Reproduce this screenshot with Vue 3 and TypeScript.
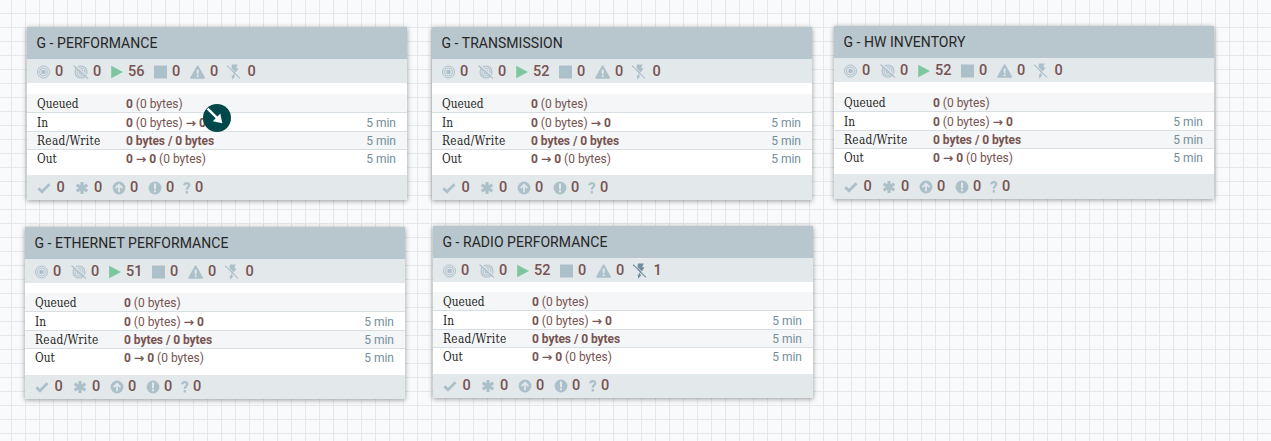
<script setup lang="ts">
interface Group {
  name: string
  x: number
  y: number
  running: number
  disabled: number
}

const groups: Group[] = [
  { name: 'G - PERFORMANCE', x: 26.5, y: 27.45, running: 56, disabled: 0 },
  { name: 'G - TRANSMISSION', x: 431.5, y: 27.45, running: 52, disabled: 0 },
  { name: 'G - HW INVENTORY', x: 833.5, y: 26.45, running: 52, disabled: 0 },
  { name: 'G - ETHERNET PERFORMANCE', x: 24.5, y: 226.5, running: 51, disabled: 0 },
  { name: 'G - RADIO PERFORMANCE', x: 432.5, y: 225.5, running: 52, disabled: 1 },
]
</script>

<template>
  <main class="canvas">
    <section
      v-for="g in groups"
      :key="g.name"
      class="group"
      :style="{ left: g.x + 'px', top: g.y + 'px' }"
    >
      <h2 class="title">{{ g.name }}</h2>

      <div class="bar status">
        <svg class="icon" width="14" height="14" viewBox="0 0 14 14">
          <g fill="none" stroke="currentColor">
            <circle cx="6.5" cy="7" r="6" stroke-width="1" />
            <circle cx="6.5" cy="7" r="4" stroke-width="1" />
          </g>
          <circle cx="6.5" cy="7" r="2.3" fill="currentColor" />
        </svg>
        <b>0</b>
        <svg class="icon" width="16" height="14" viewBox="0 0 16 14">
          <g fill="none" stroke="currentColor" stroke-width="1.1">
            <circle cx="8" cy="7" r="6" />
            <circle cx="8" cy="7" r="4" />
            <circle cx="8" cy="7" r="1.9" />
            <path class="cut" d="M1.3 -.4L15.8 12.6" stroke-width="1.2" />
            <path d="M.5 .5L15 13.5" />
          </g>
        </svg>
        <b>0</b>
        <svg class="icon running" width="13" height="14" viewBox="0 0 13 14">
          <path d="M.2 .8L12 7L.2 13.2Z" fill="currentColor" />
        </svg>
        <b>{{ g.running }}</b>
        <svg class="icon" width="14" height="14" viewBox="0 0 14 14">
          <path d="M0 .5H13V13.5H0Z" fill="currentColor" />
        </svg>
        <b>0</b>
        <svg class="icon" width="16" height="14" viewBox="0 0 16 14">
          <path
            fill="currentColor"
            fill-rule="evenodd"
            d="M6.9.8Q7.6-.3 8.4.8L15 12.4Q15.4 13.7 14.2 13.7H1Q-.1 13.6.3 12.4ZM6.6 4.8L6.9 9.2H8.5L8.8 4.8ZM6.8 10.2V12H8.6V10.2Z"
          />
        </svg>
        <b>0</b>
        <svg class="icon" :class="{ active: g.disabled > 0 }" width="14" height="16" viewBox="0 0 14 16">
          <path
            fill="currentColor"
            d="M5 .6H10.7L9.2 4.2H11.6L8.9 8.2L8 9.6L7.3 11.8L8.3 12.1L5.4 15.7L4.6 11.2L5.9 11.7L6.5 8.6L4.2 5.2Z"
          />
          <path class="cut" d="M1.2 1.2L13.7 13.6M-.8 2.2L11.8 14.8" fill="none" stroke-width=".8" />
          <path d="M.1 1.6L12.9 14.3" fill="none" stroke="currentColor" stroke-width="1.15" />
        </svg>
        <b>{{ g.disabled }}</b>
      </div>

      <dl class="stats">
        <div class="row">
          <dt><span>Queued</span></dt>
          <dd><b>0</b> (0 bytes)</dd>
        </div>
        <div class="row">
          <dt><span>In</span></dt>
          <dd><b>0</b> (0 bytes) <i>→</i> <b>0</b></dd>
          <dd class="window">5 min</dd>
        </div>
        <div class="row">
          <dt><span class="wide">Read/Write</span></dt>
          <dd><b>0 bytes / 0 bytes</b></dd>
          <dd class="window">5 min</dd>
        </div>
        <div class="row">
          <dt><span>Out</span></dt>
          <dd><b>0</b> <i>→</i> <b>0</b> (0 bytes)</dd>
          <dd class="window">5 min</dd>
        </div>
      </dl>

      <div class="bar versions">
        <svg class="icon" width="14" height="14" viewBox="0 0 14 14">
          <path d="M1.3 7.2L5 10.8L12.5 3.3" fill="none" stroke="currentColor" stroke-width="2.8" />
        </svg>
        <b>0</b>
        <svg class="icon" width="14" height="14" viewBox="0 0 14 14">
          <path d="M7 .9V13.1M1.6 3.9L12.4 10.1M12.4 3.9L1.6 10.1" stroke="currentColor" stroke-width="3.1" />
        </svg>
        <b>0</b>
        <svg class="icon" width="14" height="14" viewBox="0 0 14 14">
          <circle cx="7" cy="7" r="6.4" fill="currentColor" />
          <path class="cut" d="M7 11.2V4M3.6 7.1L7 3.7L10.4 7.1" fill="none" stroke-width="1.8" />
        </svg>
        <b>0</b>
        <svg class="icon" width="14" height="14" viewBox="0 0 14 14">
          <circle cx="7" cy="7" r="6.4" fill="currentColor" />
          <path class="cut" d="M7 2.4V8.2M7 9.3V11.3" fill="none" stroke-width="2" />
        </svg>
        <b>0</b>
        <svg class="icon" width="8" height="14" viewBox="0 0 8 14">
          <path
            d="M1.1 4.3C1.8 1.4 6.3 1.6 6.2 4.2C6.1 6 3.8 6.2 3.8 8.8M3.8 10.1V12.5"
            fill="none"
            stroke="currentColor"
            stroke-width="2.3"
          />
        </svg>
        <b>0</b>
      </div>
    </section>

    <svg class="connector" width="28" height="28" viewBox="0 0 28 28">
      <circle cx="14" cy="14" r="14" />
      <path class="shaft" d="M4.6 4.7L15.5 15.3" />
      <path class="head" d="M19.3 19.3L9.8 17.3L17.3 9.6Z" />
    </svg>
  </main>
</template>

<style>
body {
  margin: 0;
}
</style>

<style scoped>
.canvas {
  position: relative;
  width: 1271px;
  height: 441px;
  overflow: hidden;
  background-color: #f9fafb;
  background-image:
    linear-gradient(to right, #e5e8eb 1px, transparent 1px),
    linear-gradient(to bottom, #e5e8eb 1px, transparent 1px);
  background-size: 14px 14px;
  background-position: 11px 13px;
  font-family: Roboto, 'Liberation Sans', sans-serif;
}

.group {
  position: absolute;
  width: 380px;
  height: 172.4px;
  background: #fff;
  box-shadow: 0 1px 5px rgba(0, 0, 0, 0.4);
}

.title {
  box-sizing: border-box;
  height: 32px;
  margin: 0;
  padding-left: 10px;
  background: #b8c6cd;
  color: #262626;
  font-size: 14px;
  font-weight: 400;
  letter-spacing: 0.04px;
  line-height: 32.2px;
}

.bar {
  display: grid;
  align-items: center;
  height: 24.4px;
  padding-left: 10.5px;
  background: #e3e8eb;
}

.status {
  box-sizing: border-box;
  height: 24px;
  padding-top: 1px;
  grid-template-columns: 18px 18px 20px 18px 17px 26px 18px 18px 20px 18px 19.5px 20px;
}

.status .icon:nth-of-type(6) {
  margin-left: -1px;
}

.versions {
  grid-template-columns: 19.5px 18.5px 19px 18px 18px 18px 18px 17px 12px 20px;
}

.bar b {
  color: #775351;
  font-size: 14.5px;
  font-weight: 500;
  line-height: 24px;
}

.icon {
  display: block;
  color: #acc0c9;
}

.icon.running {
  color: #7dc7a0;
}

.icon.active {
  color: #728e9b;
}

.cut {
  stroke: #e3e8eb;
}

.stats {
  box-sizing: border-box;
  height: 92px;
  margin: 0;
  padding-top: 10.5px;
}

.row {
  display: grid;
  grid-template-columns: 89px 1fr auto;
  box-sizing: border-box;
  height: 18px;
  padding: 0 10.5px;
  font-size: 12px;
  line-height: 21px;
}

.row:nth-child(odd) {
  background: #f4f6f7;
}

.row + .row {
  height: 18.7px;
  border-top: 1px solid #d7dfe3;
}

.row:nth-child(3) {
  line-height: 19.4px;
}

.row:last-child {
  line-height: 18px;
}

dt {
  color: #262626;
  font-family: 'DejaVu Serif Condensed', 'DejaVu Serif', serif;
}

dt span {
  display: inline-block;
  transform: scaleX(0.98);
  transform-origin: left;
}

dt .wide {
  letter-spacing: 0.35px;
}

dd {
  margin: 0;
  color: #775351;
}

dd b {
  font-weight: 700;
  letter-spacing: -0.05px;
}

dd i {
  margin: 0 0.2px;
  font-family: 'DejaVu Sans', sans-serif;
  font-size: 12px;
  font-style: normal;
  line-height: 1;
  -webkit-text-stroke: 0.3px currentColor;
}

dd.window {
  color: #728e9b;
}

.connector {
  position: absolute;
  left: 203px;
  top: 104px;
  fill: #004849;
}

.connector .shaft {
  stroke: #fff;
  stroke-width: 2.4;
}

.connector .head {
  fill: #fff;
}
</style>
